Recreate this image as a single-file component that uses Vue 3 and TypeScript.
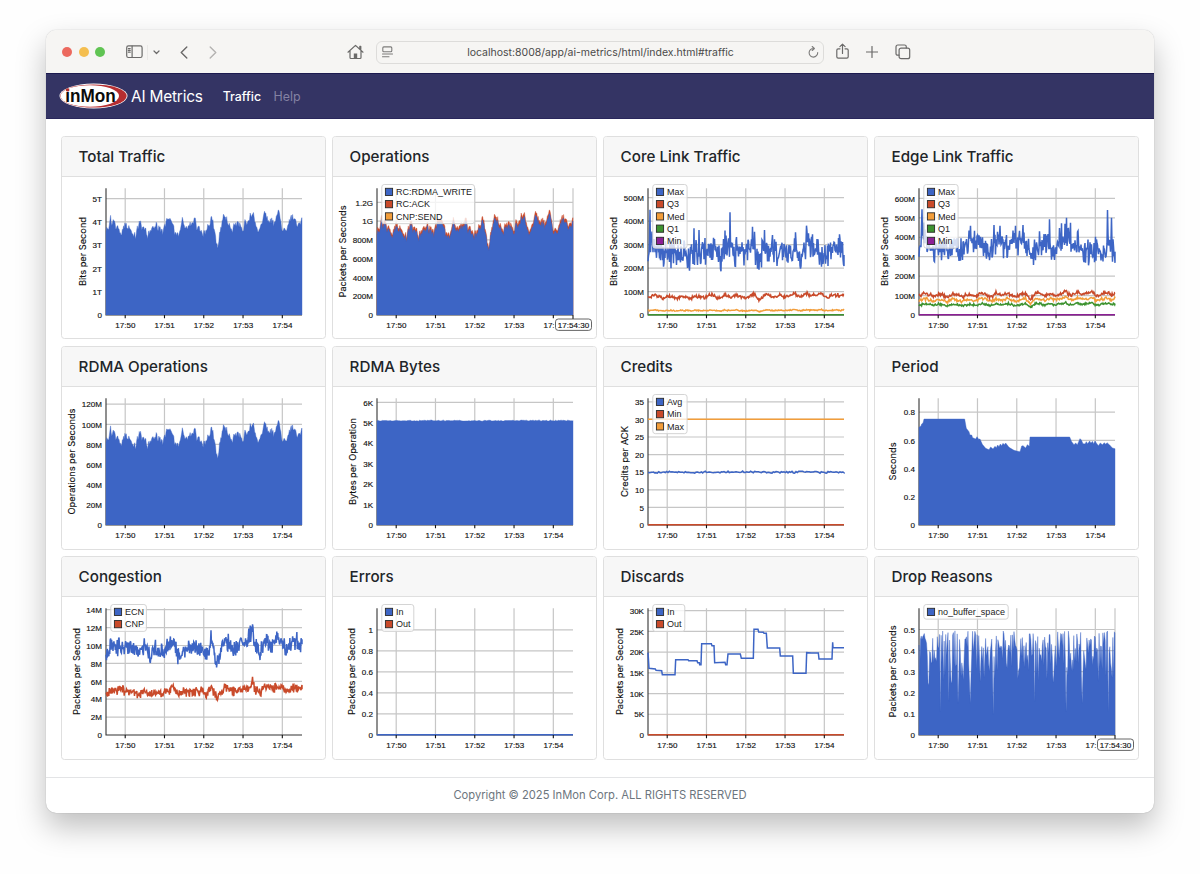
<script setup lang="ts">
interface Series {
  name: string
  color: string
  points: string
  filled?: boolean
}
interface Chart {
  title: string
  yLabel: string
  yLabelX: number
  yLabelLength: number
  ticks: string[]
  step: number
  series: Series[]
  legendWidth?: number
  cursor?: boolean
}
type Knot = [number, number]

const BLUE = '#3d65c5'
const RED = '#c94a2a'
const ORANGE = '#f29d3a'
const GREEN = '#3d9330'
const PURPLE = '#8c1f96'

// Plot geometry inside a card. Series data uses three units per pixel.
const LEFT = 45
const RIGHT = 241
const TOP = 52.2
const BASE = 179
const SPAN = 588
const timeTicks = ['17:50', '17:51', '17:52', '17:53', '17:54'].map((label, i) => ({
  label,
  x: 64.2 + i * 39.28,
}))

function random(seed: number) {
  let s = seed
  return () => {
    s = (s * 1664525 + 1013904223) % 4294967296
    return s / 4294967296
  }
}

function level(knots: Knot[], x: number) {
  let i = 1
  while (i < knots.length - 1 && knots[i][0] < x) i++
  const [x0, y0] = knots[i - 1]
  const [x1, y1] = knots[i]
  return y0 + ((y1 - y0) * (x - x0)) / (x1 - x0)
}

const toPoint = (x: number, y: number) => `${(LEFT + x / 3).toFixed(2)},${(BASE - y / 3).toFixed(2)}`

function plain(knots: Knot[]) {
  return knots.map(([x, y]) => toPoint(x, y)).join(' ')
}

function noisy(knots: Knot[], scale: number, noise: number, seed: number, step = 1.957, spikes: Knot[] = []) {
  const rnd = random(seed)
  const out: string[] = []
  for (let x = 0; x <= SPAN; x += step) {
    const r = rnd() + rnd() - 1
    const spike = spikes.find(([sx]) => Math.abs(sx - x) < step / 2)
    out.push(toPoint(x, spike ? spike[1] : level(knots, x) * scale + r * noise))
  }
  out.push(toPoint(SPAN, level(knots, SPAN) * scale))
  return out.join(' ')
}

function closed(points: string) {
  return `${toPoint(0, 0)} ${points} ${toPoint(SPAN, 0)}`
}

const load: Knot[] = [
  [0, 255], [8, 262], [14, 295], [18, 275], [22, 293], [28, 262], [34, 278], [40, 255], [46, 242], [52, 265],
  [60, 280], [64, 262], [70, 270], [76, 250], [84, 240], [90, 245], [96, 265], [102, 282], [108, 262], [114, 268],
  [120, 255], [127, 240], [134, 250], [140, 275], [146, 262], [152, 275], [158, 260], [164, 262], [170, 245],
  [176, 265], [182, 285], [188, 293], [196, 285], [202, 275], [206, 250], [212, 243], [220, 245], [226, 265],
  [230, 302], [236, 268], [242, 272], [248, 262], [254, 270], [262, 285], [268, 292], [272, 262], [278, 270],
  [284, 252], [292, 245], [300, 255], [306, 275], [312, 280], [318, 297], [322, 275], [326, 255], [330, 230],
  [334, 200], [338, 225], [344, 265], [350, 290], [356, 305], [362, 285], [370, 270], [378, 255], [384, 275],
  [390, 270], [396, 290], [402, 270], [408, 262], [412, 250], [416, 285], [422, 275], [430, 290], [436, 305],
  [440, 315], [446, 285], [452, 265], [460, 258], [466, 280], [472, 290], [476, 310], [482, 290], [490, 280],
  [498, 290], [504, 280], [510, 295], [516, 310], [521, 315], [526, 280], [528, 255], [534, 258], [542, 255],
  [548, 280], [554, 290], [560, 305], [564, 285], [568, 292], [574, 270], [580, 275], [588, 295],
]
const congestion: Knot[] = [
  [0, 245], [20, 268], [40, 265], [60, 262], [80, 265], [95, 240], [115, 268], [132, 238], [150, 258], [175, 252],
  [200, 278], [217, 238], [235, 262], [260, 258], [285, 262], [300, 235], [317, 292], [325, 245], [333, 212],
  [345, 255], [360, 285], [380, 260], [400, 265], [420, 275], [440, 312], [450, 262], [463, 250], [478, 288],
  [495, 270], [515, 292], [528, 275], [542, 252], [560, 280], [575, 280], [588, 272],
]

const coreMax: Knot[] = [
  [0, 190], [10, 225], [25, 205], [50, 185], [60, 200], [90, 188], [125, 180], [150, 195], [180, 190], [210, 195],
  [217, 165], [232, 220], [250, 185], [290, 190], [315, 215], [332, 170], [350, 200], [380, 190], [410, 195],
  [440, 190], [460, 165], [476, 225], [490, 200], [520, 175], [555, 190], [575, 210], [588, 180],
]
const coreSpikes: Knot[] = [
  [6, 316], [46, 145], [69, 140], [125, 133], [138, 260], [153, 255], [218, 138], [246, 308], [314, 265],
  [319, 250], [333, 136], [350, 255], [373, 240], [442, 248], [475, 268], [481, 245], [575, 242],
]
const edgeMax: Knot[] = [
  [0, 205], [12, 240], [30, 205], [45, 190], [80, 195], [105, 220], [125, 190], [165, 225], [190, 220], [213, 180],
  [228, 220], [260, 205], [300, 225], [322, 210], [335, 175], [360, 215], [410, 200], [430, 235], [470, 215],
  [500, 190], [550, 185], [570, 210], [588, 190],
]
const edgeSpikes: Knot[] = [
  [9, 317], [46, 160], [125, 163], [155, 268], [225, 270], [243, 268], [290, 268], [312, 270], [392, 287],
  [428, 275], [442, 292], [455, 277], [477, 252], [530, 235], [566, 315], [577, 292],
]
const period: Knot[] = [
  [0, 293], [6, 297], [8, 303], [12, 306], [15, 318], [137, 318], [142, 290], [150, 280], [153, 270], [158, 270],
  [161, 262], [170, 258], [174, 265], [179, 257], [183, 258], [190, 242], [200, 230], [210, 226], [215, 234],
  [222, 228], [228, 236], [232, 232], [236, 240], [240, 235], [244, 243], [248, 238], [252, 245], [256, 241],
  [260, 246], [270, 233], [285, 224], [296, 221], [303, 220], [308, 237], [312, 238], [320, 231], [325, 241],
  [331, 236], [333, 264], [452, 264], [458, 250], [465, 241], [470, 246], [475, 241], [483, 259], [487, 255],
  [492, 244], [498, 243], [502, 250], [506, 244], [512, 252], [516, 245], [520, 251], [524, 244], [528, 252],
  [532, 246], [538, 238], [544, 246], [550, 241], [556, 247], [560, 242], [564, 247], [572, 240], [580, 231],
  [588, 229],
]
const discards: Knot[] = [
  [0, 247], [3, 200], [22, 198], [24, 194], [41, 193], [43, 181], [81, 181], [83, 226], [120, 226], [122, 223],
  [147, 223], [149, 217], [154, 217], [155, 211], [159, 211], [161, 274], [190, 274], [192, 268], [198, 268],
  [200, 217], [231, 218], [233, 211], [237, 211], [240, 243], [277, 243], [280, 230], [316, 230], [318, 317],
  [330, 317], [332, 309], [346, 308], [348, 305], [355, 305], [358, 261], [395, 261], [397, 237], [434, 237],
  [436, 185], [474, 185], [476, 247], [490, 246], [511, 246], [513, 228], [552, 228], [554, 278], [555, 262],
  [588, 262],
]

function drops() {
  const rnd = random(77)
  const deep: Knot[] = [[63, 70], [90, 100], [118, 95], [154, 95], [222, 60], [347, 100], [442, 70], [490, 95], [568, 70]]
  const out: string[] = [toPoint(0, 270)]
  let high = false
  for (let x = 2; x < SPAN; x += 2.3) {
    const dip = deep.find(([sx]) => Math.abs(sx - x) <= 1.15)
    const r = rnd()
    if (dip) out.push(toPoint(x, dip[1]))
    else if (high) out.push(toPoint(x, 215 + Math.sqrt(r) * 98))
    else out.push(toPoint(x, 150 + r * 120))
    high = rnd() < 0.58
  }
  out.push(toPoint(SPAN, 305))
  return out.join(' ')
}

const flat = (y: number): Knot[] => [[0, y], [SPAN, y]]
const area = (points: string, name = '', color = BLUE): Series => ({ name, color, points: closed(points), filled: true })
const line = (name: string, color: string, points: string): Series => ({ name, color, points })

const charts: Chart[] = [
  {
    title: 'Total Traffic', yLabel: 'Bits per Second', yLabelX: 25.3, yLabelLength: 69,
    ticks: ['0', '1T', '2T', '3T', '4T', '5T'], step: 69.8,
    series: [area(noisy(load, 0.99, 14, 3))],
  },
  {
    title: 'Operations', yLabel: 'Packets per Seconds', yLabelX: 13.5, yLabelLength: 92,
    ticks: ['0', '200M', '400M', '600M', '800M', '1G', '1.2G'], step: 56.3, legendWidth: 92.7, cursor: true,
    series: [
      area(noisy(load, 0.955, 13, 3), 'RC:RDMA_WRITE'),
      area(noisy(load, 0.99, 14, 3), 'RC:ACK', RED),
      { name: 'CNP:SEND', color: ORANGE, points: '' },
    ],
  },
  {
    title: 'Core Link Traffic', yLabel: 'Bits per Second', yLabelX: 13.5, yLabelLength: 69,
    ticks: ['0', '100M', '200M', '300M', '400M', '500M'], step: 70.4, legendWidth: 34.3,
    series: [
      line('Max', BLUE, noisy(coreMax, 1, 50, 21, 1.5, coreSpikes)),
      line('Q3', RED, noisy(load, 0.208, 6, 5)),
      line('Med', ORANGE, noisy(load, 0.051, 2, 6)),
      line('Q1', GREEN, plain(flat(1))),
      { name: 'Min', color: PURPLE, points: '' },
    ],
  },
  {
    title: 'Edge Link Traffic', yLabel: 'Bits per Second', yLabelX: 13.5, yLabelLength: 69,
    ticks: ['0', '100M', '200M', '300M', '400M', '500M', '600M'], step: 58.3, legendWidth: 34.3,
    series: [
      line('Max', BLUE, noisy(edgeMax, 1, 46, 31, 1.5, edgeSpikes)),
      line('Q3', RED, noisy(load, 0.226, 6, 7)),
      line('Med', ORANGE, noisy(load, 0.17, 5, 8)),
      line('Q1', GREEN, noisy(load, 0.117, 4, 9)),
      line('Min', PURPLE, plain(flat(1))),
    ],
  },
  {
    title: 'RDMA Operations', yLabel: 'Operations per Seconds', yLabelX: 14, yLabelLength: 106,
    ticks: ['0', '20M', '40M', '60M', '80M', '100M', '120M'], step: 60.4,
    series: [area(noisy(load, 0.985, 14, 3))],
  },
  {
    title: 'RDMA Bytes', yLabel: 'Bytes per Operation', yLabelX: 24.3, yLabelLength: 87,
    ticks: ['0', '1K', '2K', '3K', '4K', '5K', '6K'], step: 61.3,
    series: [area(noisy(flat(313), 1, 2, 4, 4))],
  },
  {
    title: 'Credits', yLabel: 'Credits per ACK', yLabelX: 25, yLabelLength: 71,
    ticks: ['0', '5', '10', '15', '20', '25', '30', '35'], step: 52.8, legendWidth: 34.3,
    series: [
      line('Avg', BLUE, noisy(flat(158.5), 1, 4, 14, 4)),
      line('Min', RED, plain(flat(1))),
      line('Max', ORANGE, plain(flat(317))),
    ],
  },
  {
    title: 'Period', yLabel: 'Seconds', yLabelX: 22.3, yLabelLength: 38,
    ticks: ['0', '0.2', '0.4', '0.6', '0.8'], step: 84.6,
    series: [area(plain(period))],
  },
  {
    title: 'Congestion', yLabel: 'Packets per Second', yLabelX: 19, yLabelLength: 87,
    ticks: ['0', '2M', '4M', '6M', '8M', '10M', '12M', '14M'], step: 53.7, legendWidth: 35.6,
    series: [
      line('ECN', BLUE, noisy(congestion, 1, 32, 15, 1.4)),
      line('CNP', RED, noisy(congestion, 0.505, 18, 16, 1.4)),
    ],
  },
  {
    title: 'Errors', yLabel: 'Packets per Second', yLabelX: 22.5, yLabelLength: 87,
    ticks: ['0', '0.2', '0.4', '0.6', '0.8', '1'], step: 63.1, legendWidth: 32,
    series: [line('In', BLUE, plain(flat(1))), { name: 'Out', color: RED, points: '' }],
  },
  {
    title: 'Discards', yLabel: 'Packets per Second', yLabelX: 19.5, yLabelLength: 87,
    ticks: ['0', '5K', '10K', '15K', '20K', '25K', '30K'], step: 62.2, legendWidth: 32,
    series: [line('In', BLUE, plain(discards)), line('Out', RED, plain(flat(1)))],
  },
  {
    title: 'Drop Reasons', yLabel: 'Packets per Seconds', yLabelX: 22.3, yLabelLength: 92,
    ticks: ['0', '0.1', '0.2', '0.3', '0.4', '0.5'], step: 63.3, legendWidth: 84.4, cursor: true,
    series: [area(drops(), 'no_buffer_space')],
  },
]

const drawn = (c: Chart) => c.series.filter((s) => s.points).reverse()
// The cursor flag covers the end of the last time label.
const timeLabel = (c: Chart, label: string) => (c.cursor && label === '17:54' ? '17:' : label)
</script>

<template>
  <div class="desktop">
    <div class="window">
      <header class="toolbar">
        <div class="lights"><i class="close" /><i class="minimise" /><i class="zoom" /></div>
        <svg class="icon sidebar" width="17" height="14" viewBox="0 0 17 14">
          <rect x="0.7" y="0.9" width="15.4" height="11.6" rx="1.8" />
          <path d="M6.1 1v11.4M2.4 3.6h1.8M2.4 5.4h1.8M2.4 7.2h1.8" />
        </svg>
        <span class="split" />
        <svg class="icon chevron" width="7" height="5" viewBox="0 0 7 5"><path d="M1 1l2.5 2.5L6 1" /></svg>
        <svg class="icon back" width="8" height="13" viewBox="0 0 8 13"><path d="M6.8 1L1.2 6.5l5.6 5.5" /></svg>
        <svg class="icon forward" width="8" height="13" viewBox="0 0 8 13"><path d="M1.2 1l5.6 5.5L1.2 12" /></svg>
        <svg class="icon home" width="17" height="16" viewBox="0 0 17 16">
          <path d="M1 8.2L8.5 1.4 16 8.2M3 7v6.5q0 1 1 1h9q1 0 1-1V7M12.8 4.8V2.4h1v3.2" />
          <path class="solid" d="M6.8 14.5V9.6h3.4v4.9z" />
        </svg>
        <div class="address">
          <svg class="icon reader" width="11" height="12" viewBox="0 0 11 12">
            <rect x="0.8" y="0.9" width="9" height="4.8" rx="1" />
            <path d="M0.5 8h10M0.5 10.8h6.5" />
          </svg>
          <span class="url">localhost:8008/app/ai-metrics/html/index.html#traffic</span>
          <svg class="icon reload" width="11" height="12" viewBox="0 0 11 12">
            <path d="M9.7 6.6A4.3 4.3 0 1 1 5.6 2.5M4.2 0.5l2.2 2-2.2 2" />
          </svg>
        </div>
        <svg class="icon share" width="13" height="17" viewBox="0 0 13 17">
          <path d="M4 5.8H2.2Q.8 5.8.8 7.2v6.6q0 1.4 1.4 1.4h8.6q1.4 0 1.4-1.4V7.2q0-1.4-1.4-1.4H9M6.5 10.5V1.2M3.9 3.6l2.6-2.5 2.6 2.5" />
        </svg>
        <svg class="icon plus" width="12" height="12" viewBox="0 0 12 12"><path d="M6 .5v11M.5 6h11" /></svg>
        <svg class="icon tabs" width="16" height="16" viewBox="0 0 16 16">
          <rect x="4.1" y="4.1" width="10.6" height="10.6" rx="2" />
          <path d="M4 11.2H2.8q-1.8 0-1.8-1.8V2.9Q1 1 2.9 1h6.6q1.8 0 1.8 1.8V4" />
        </svg>
      </header>

      <nav class="navbar">
        <svg class="logo" width="69" height="26" viewBox="0 0 69 26">
          <ellipse cx="34.5" cy="13" rx="34" ry="12.4" fill="#fff" />
          <ellipse cx="34.5" cy="13" rx="33.2" ry="11.6" fill="#b62d30" />
          <ellipse cx="30.8" cy="13" rx="29.2" ry="10.8" fill="#fff" />
          <text x="6.3" y="18.5" textLength="50.5" lengthAdjust="spacingAndGlyphs">inMon</text>
          <circle cx="8.7" cy="6.9" r="1.7" fill="#b62d30" />
        </svg>
        <span class="brand">AI Metrics</span>
        <a class="link active">Traffic</a>
        <a class="link">Help</a>
      </nav>

      <main class="grid">
        <section v-for="c in charts" :key="c.title" class="card">
          <h2 class="card-title">{{ c.title }}</h2>
          <svg class="chart" viewBox="1 41 263 161">
            <g class="gridlines">
              <path v-for="t in timeTicks" :key="t.label" :d="`M${t.x} ${TOP}V${BASE}`" />
              <path v-for="(t, i) in c.ticks.slice(1)" :key="t" :d="`M${LEFT} ${BASE - ((i + 1) * c.step) / 3}H${RIGHT}`" />
              <path v-if="c.cursor" :d="`M${RIGHT} ${TOP}V${BASE}`" />
            </g>
            <path class="axis" :d="`M${LEFT} ${TOP}V${BASE}H${RIGHT}`" />
            <polyline
              v-for="s in drawn(c)"
              :key="s.name"
              :points="s.points"
              :fill="s.filled ? s.color : 'none'"
              :stroke="s.color"
              :stroke-width="s.filled ? 0.4 : 1.5"
            />
            <path v-for="t in timeTicks" :key="t.label" class="tick" :d="`M${t.x} ${BASE}v3.2`" />
            <g class="labels">
              <text v-for="t in timeTicks" :key="t.label" :x="t.x - 9.9" y="191.7">{{ timeLabel(c, t.label) }}</text>
              <text v-for="(t, i) in c.ticks" :key="t" x="41" :y="BASE - (i * c.step) / 3 + 3.2" text-anchor="end">{{ t }}</text>
            </g>
            <text
              class="y-label"
              :transform="`translate(${c.yLabelX} 115.5) rotate(-90)`"
              text-anchor="middle"
              :textLength="c.yLabelLength"
              lengthAdjust="spacingAndGlyphs"
            >{{ c.yLabel }}</text>
            <g v-if="c.legendWidth" class="legend">
              <rect class="legend-box" x="49.8" y="48.5" :width="c.legendWidth" :height="c.series.length * 12.25 + 2.4" rx="2.5" />
              <template v-for="(s, i) in c.series" :key="s.name">
                <rect class="swatch" x="53.4" :y="52.3 + i * 12.25" width="7.2" height="7.2" :fill="s.color" />
                <text x="64" :y="59 + i * 12.25">{{ s.name }}</text>
              </template>
            </g>
            <g v-if="c.cursor" class="cursor">
              <path class="tick" :d="`M${RIGHT} ${BASE}v4`" />
              <rect x="223.5" y="183" width="36" height="11.4" rx="2.8" />
              <text x="241.5" y="191.7" text-anchor="middle">17:54:30</text>
            </g>
          </svg>
        </section>
      </main>

      <footer class="footer">Copyright © 2025 InMon Corp. ALL RIGHTS RESERVED</footer>
    </div>
  </div>
</template>

<style>
body {
  margin: 0;
  background: #fefefe;
}
</style>

<style scoped>
.desktop {
  box-sizing: border-box;
  width: 1200px;
  height: 874px;
  padding: 30px 46px 0;
  overflow: hidden;
  font-family: Inter, "Liberation Sans", sans-serif;
}
.window {
  height: 783.4px;
  border-radius: 10px;
  overflow: hidden;
  background: #fff;
  display: flex;
  flex-direction: column;
  box-shadow: 0 0 1px rgba(0, 0, 0, 0.35), 0 14px 30px rgba(0, 0, 0, 0.25);
}
.toolbar {
  flex: none;
  display: flex;
  align-items: center;
  box-sizing: border-box;
  height: 43.4px;
  padding: 1px 0 0 16px;
  background: #f6f5f3;
}
.lights {
  display: flex;
  gap: 6.5px;
}
.lights i {
  width: 10px;
  height: 10px;
  border-radius: 50%;
}
.close { background: #ec695e; }
.minimise { background: #f4be4f; }
.zoom { background: #60c453; }
.icon {
  flex: none;
  fill: none;
  stroke: #6b6a69;
  stroke-width: 1.2;
  stroke-linecap: round;
  stroke-linejoin: round;
}
.solid { fill: #6b6a69; stroke: none; }
.sidebar { margin-left: 20.5px; }
.split {
  width: 1px;
  height: 15px;
  margin-left: 4.5px;
  background: #eae9e7;
}
.chevron { margin-left: 4.5px; }
.back { margin-left: 20px; }
.back, .forward { stroke-width: 1.4; }
.forward { margin-left: 21px; stroke: #b4b3b1; }
.home { margin-left: 130px; }
.address {
  flex: none;
  display: flex;
  align-items: center;
  justify-content: space-between;
  box-sizing: border-box;
  width: 448px;
  height: 23px;
  margin-left: 12px;
  padding: 0 3px 0 5px;
  border: 1px solid #dddcda;
  border-radius: 6px;
}
.reader, .reload { stroke: #7d7c7b; stroke-width: 1.1; }
.url {
  font-size: 10.5px;
  color: #4b4a49;
}
.share { margin-left: 12px; margin-top: -1.5px; }
.plus { margin-left: 17px; }
.tabs { margin-left: 17.5px; }
.navbar {
  flex: none;
  display: flex;
  align-items: center;
  box-sizing: border-box;
  height: 46.1px;
  padding-left: 12.5px;
  background: #343464;
  border-top: 1px solid #1c1a4f;
  border-bottom: 1px solid #29275c;
  color: #fff;
}
.logo text {
  font: 700 17.5px "Liberation Sans", sans-serif;
  fill: #0b0b0b;
}
.brand {
  margin-left: 3.5px;
  font-size: 15.4px;
  letter-spacing: -0.2px;
}
.link {
  margin-left: 20px;
  font-size: 12.4px;
  color: #8482a3;
}
.link.active {
  color: #fff;
  font-weight: 500;
}
.link + .link { margin-left: 12.5px; }
.grid {
  flex: none;
  display: grid;
  grid-template-columns: repeat(4, 265px);
  grid-auto-rows: 203.5px;
  column-gap: 6px;
  row-gap: 6.7px;
  padding: 16.5px 15.2px 0;
}
.card {
  box-sizing: border-box;
  border: 1px solid #dfdfdf;
  border-radius: 3.5px;
  overflow: hidden;
}
.card-title {
  box-sizing: border-box;
  height: 40px;
  margin: 0;
  padding-left: 16.4px;
  border-bottom: 1px solid #dfdfdf;
  background: #f7f7f7;
  color: #212529;
  font-size: 15.2px;
  font-weight: 500;
  line-height: 40px;
}
.chart {
  display: block;
  width: 263px;
  height: 161px;
}
.gridlines path {
  stroke: #c6c6c6;
  stroke-width: 1.2;
}
.axis {
  fill: none;
  stroke: #333;
  stroke-width: 1.1;
}
.tick {
  stroke: #111;
  stroke-width: 1.1;
}
.labels text, .cursor text {
  font: 8.05px "Liberation Sans", sans-serif;
  fill: #111;
  stroke: #111;
  stroke-width: 0.15;
}
.y-label {
  font-size: 9px;
  fill: #111;
  stroke: #111;
  stroke-width: 0.12;
}
.legend-box {
  fill: rgba(255, 255, 255, 0.78);
  stroke: #cfcfcf;
  stroke-width: 0.9;
}
.swatch {
  stroke: #2a2a2a;
  stroke-width: 0.9;
}
.legend text {
  font: 9px "Liberation Sans", sans-serif;
  fill: #222;
}
.cursor rect {
  fill: #fff;
  stroke: #555;
  stroke-width: 0.9;
}
.footer {
  flex: 1;
  margin-top: 17.2px;
  border-top: 1px solid #e3e4e6;
  text-align: center;
  line-height: 35px;
  font-size: 11.2px;
  color: #6c757d;
}
</style>
